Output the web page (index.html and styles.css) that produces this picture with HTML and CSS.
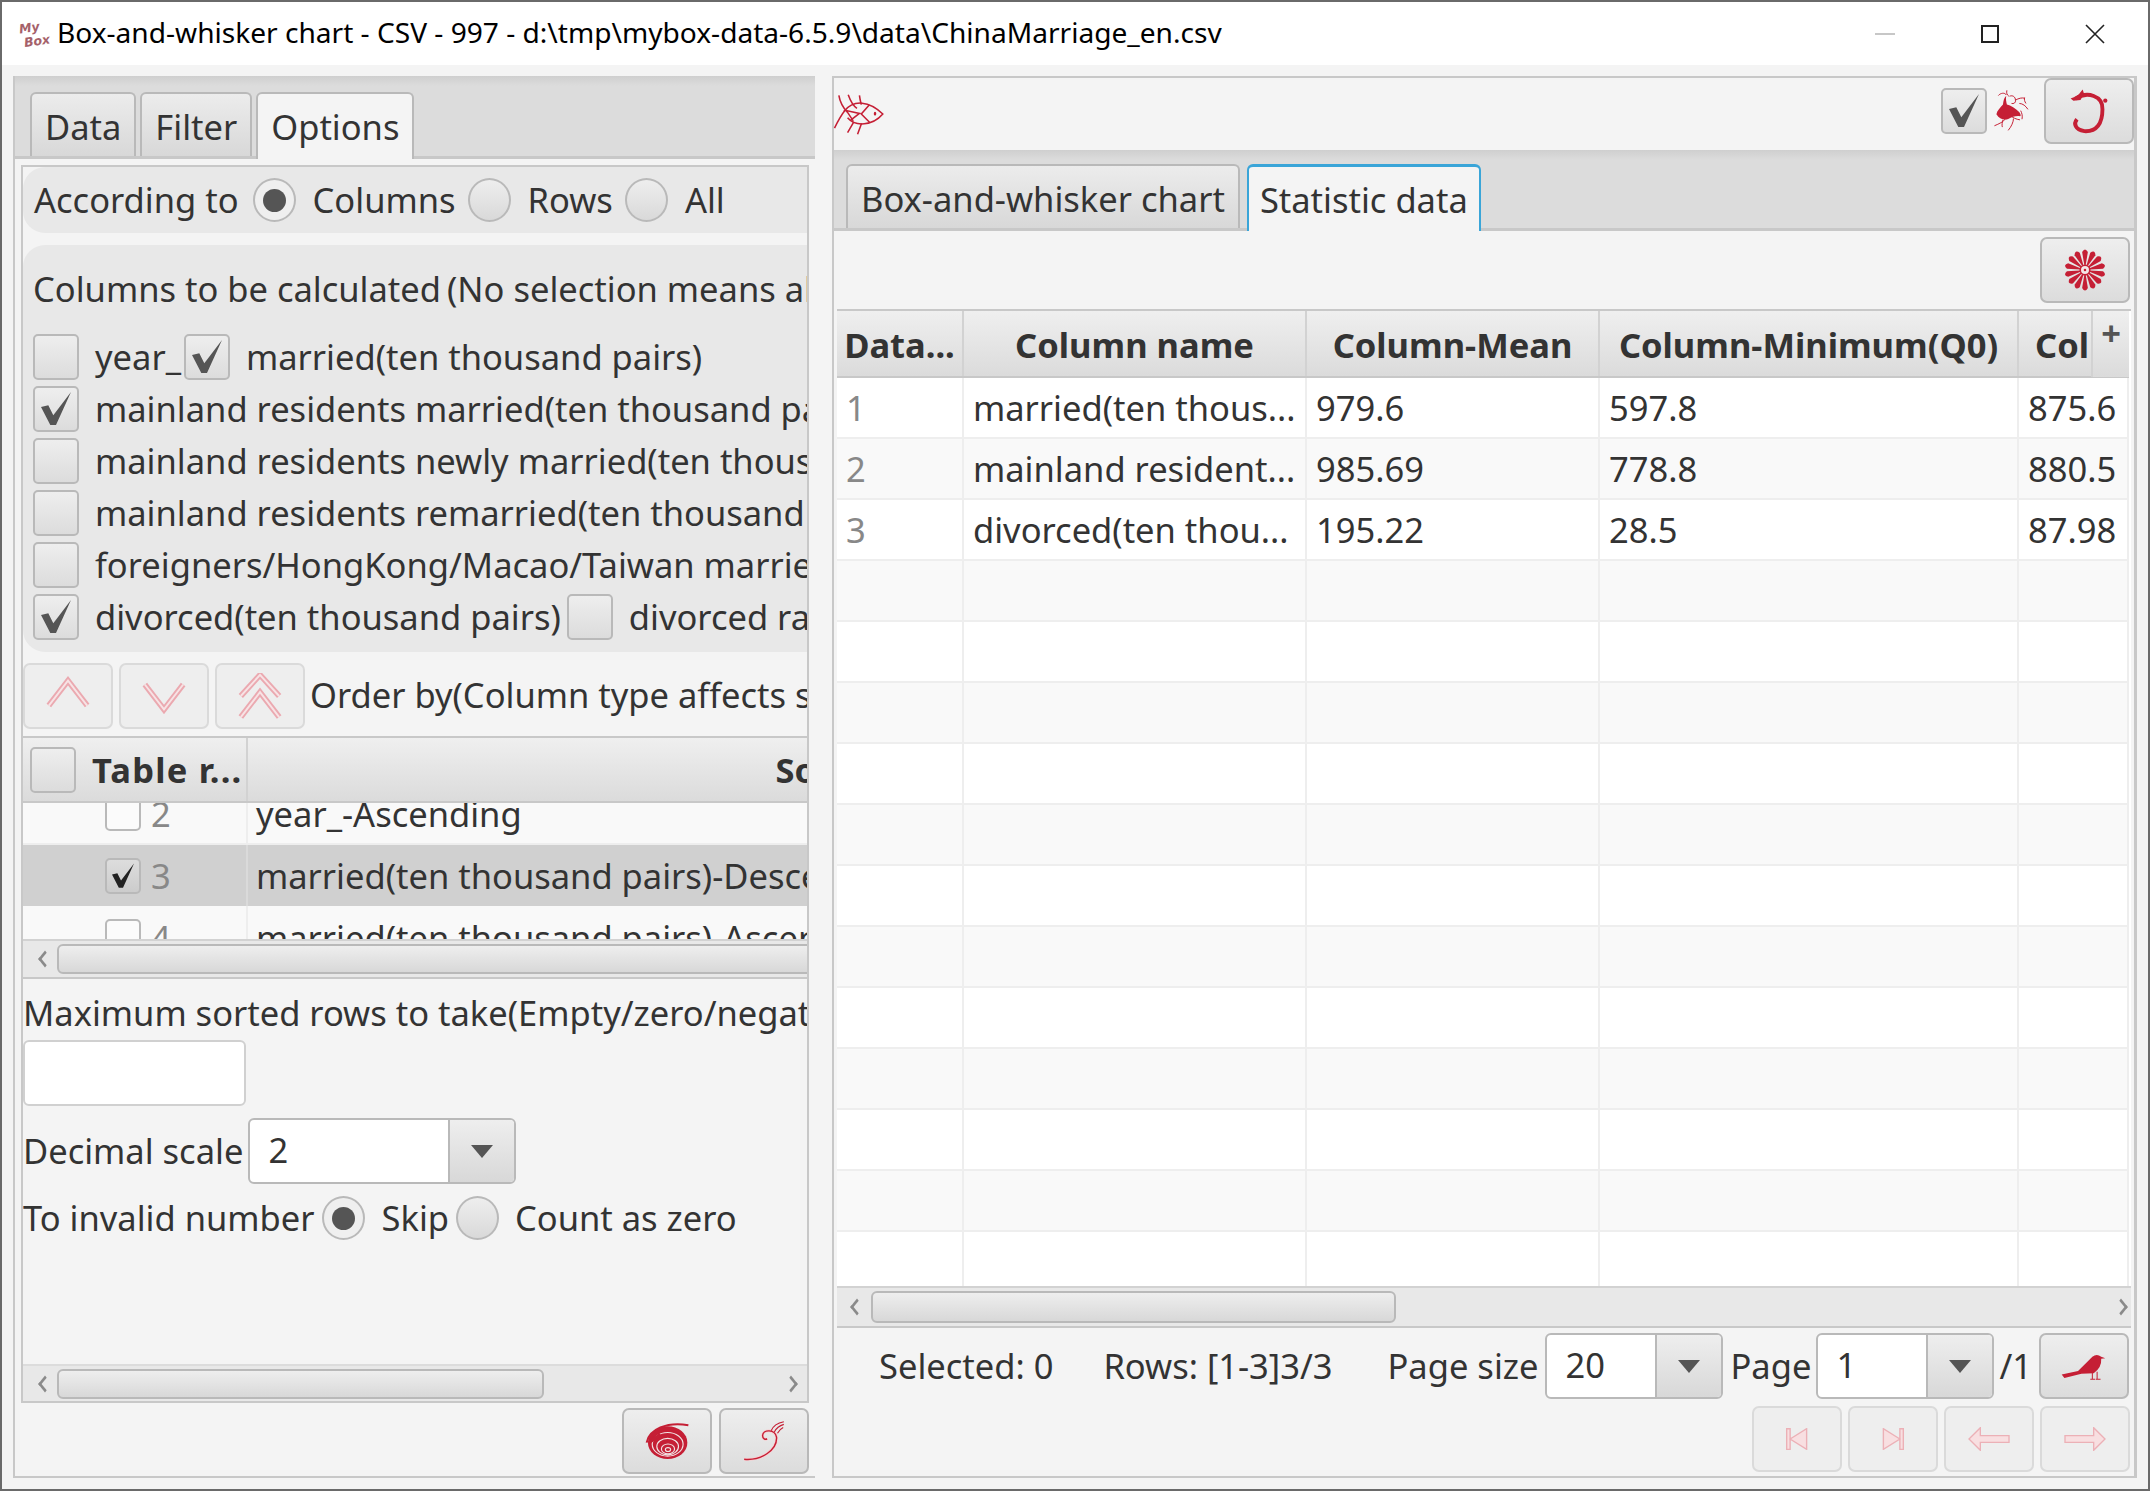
FILE: index.html
```html
<!DOCTYPE html>
<html lang="en">
<head>
  <meta charset="UTF-8"/>
  <title>Box-and-whisker chart - CSV - 997</title>
  <link rel="stylesheet" href="styles.css">
</head>
<body>
  <header class="titlebar">
    <div class="app-logo"><span>My</span><span>Box</span></div>
    <div class="title-text">Box-and-whisker chart - CSV - 997 - d:\tmp\mybox-data-6.5.9\data\ChinaMarriage_en.csv</div>
    <div class="win-controls">
      <svg class="win-icon" viewBox="0 0 20 20"><path d="M0 10h20" stroke="#b5b5b5" stroke-width="1.5"/></svg>
      <svg class="win-icon" viewBox="0 0 20 20"><rect x="2" y="2" width="16" height="16" fill="none" stroke="#222" stroke-width="2"/></svg>
      <svg class="win-icon" viewBox="0 0 20 20"><path d="M1 1l18 18M19 1L1 19" stroke="#222" stroke-width="1.6"/></svg>
    </div>
  </header>

  <div class="workspace">
    <!-- left pane -->
    <section class="left-pane">
      <div class="tab-header">
        <div class="tab">Data</div>
        <div class="tab">Filter</div>
        <div class="tab active">Options</div>
      </div>
      <div class="left-body">
        <div class="scroll-box">
          <div class="options">
            <div class="according">
              <span class="lbl l-according">According to</span>
              <span class="radio on"></span><span class="lbl l-columns">Columns</span>
              <span class="radio"></span><span class="lbl l-rows">Rows</span>
              <span class="radio"></span><span class="lbl l-all">All</span>
            </div>
            <div class="columns-group">
              <div class="group-title">Columns to be calculated<span class="thin-gap"></span>(No selection means all columns)</div>
              <div class="check-row"><span class="check"></span><span class="lbl">year_</span><span class="check on check-near">
                <svg class="tick" viewBox="0 0 30 34"><path d="M0 15l7.3-1.7 5 10L30 0 15 33H9.3z"/></svg></span><span class="lbl">married(ten thousand pairs)</span></div>
              <div class="check-row"><span class="check on">
                <svg class="tick" viewBox="0 0 30 34"><path d="M0 15l7.3-1.7 5 10L30 0 15 33H9.3z"/></svg></span><span class="lbl">mainland residents married(ten thousand pairs)</span></div>
              <div class="check-row"><span class="check"></span><span class="lbl">mainland residents newly married(ten thousand pairs)</span></div>
              <div class="check-row"><span class="check"></span><span class="lbl">mainland residents remarried(ten thousand pairs)</span></div>
              <div class="check-row"><span class="check"></span><span class="lbl">foreigners/HongKong/Macao/Taiwan married(ten thousand pairs)</span></div>
              <div class="check-row"><span class="check on">
                <svg class="tick" viewBox="0 0 30 34"><path d="M0 15l7.3-1.7 5 10L30 0 15 33H9.3z"/></svg></span><span class="lbl">divorced(ten thousand pairs)</span><span class="check"></span><span class="lbl">divorced rate</span></div>
            </div>

            <div class="order-bar">
              <button class="btn faded"><svg class="btn-icon" viewBox="0 0 48 48"><path class="chev" d="M4 34L24 8l20 26"/><path class="chev-in" d="M4 34L24 8l20 26"/></svg></button>
              <button class="btn faded"><svg class="btn-icon" viewBox="0 0 48 48"><path class="chev" d="M4 12l20 26 20-26"/><path class="chev-in" d="M4 12l20 26 20-26"/></svg></button>
              <button class="btn faded"><svg class="btn-icon" viewBox="0 0 48 48"><path class="chev" d="M4 24L24 2l20 22M4 46l20-26 20 26"/><path class="chev-in" d="M4 24L24 2l20 22M4 46l20-26 20 26"/></svg></button>
              <span class="lbl order-label">Order by(Column type affects sorting)</span>
            </div>

            <div class="sort-table">
              <div class="sort-head">
                <div class="sort-h-first"><span class="check"></span><b class="table-r">Table r...</b></div>
                <div class="sort-h-name"><b>Sort</b></div>
              </div>
              <div class="sort-rows">
                <div class="sort-row odd">
                  <div class="sort-num"><span class="check small"></span><span class="num">2</span></div>
                  <div class="sort-name">year_-Ascending</div>
                </div>
                <div class="sort-row selected">
                  <div class="sort-num"><span class="check small on"><svg class="tick" viewBox="0 0 30 34"><path d="M0 15l7.3-1.7 5 10L30 0 15 33H9.3z" fill="#222"/></svg></span><span class="num">3</span></div>
                  <div class="sort-name">married(ten thousand pairs)-Descending</div>
                </div>
                <div class="sort-row">
                  <div class="sort-num"><span class="check small"></span><span class="num">4</span></div>
                  <div class="sort-name">married(ten thousand pairs)-Ascending</div>
                </div>
              </div>
              <div class="hscroll inner">
                <span class="arrow-left"></span>
                <span class="thumb thumb-wide"></span>
              </div>
            </div>

            <div class="lbl max-label">Maximum sorted rows to take(Empty/zero/negative means all)</div>
            <div class="text-input"></div>
            <div class="scale-row">
              <span class="lbl">Decimal scale</span>
              <div class="combo combo-scale"><span class="combo-value">2</span><span class="combo-arrow"></span></div>
            </div>
            <div class="invalid-row">
              <span class="lbl l-invalid">To invalid number</span>
              <span class="radio on"></span><span class="lbl l-skip">Skip</span>
              <span class="radio"></span><span class="lbl l-zero">Count as zero</span>
            </div>
          </div>
          <div class="hscroll outer">
            <span class="arrow-left"></span>
            <span class="thumb thumb-outer"></span>
            <span class="arrow-right"></span>
          </div>
        </div>
        <div class="left-actions">
          <button class="btn">
            <svg class="btn-icon" viewBox="135 100 140 120">
              <path d="M143 165C150 125 205 100 270 112" fill="none" stroke="#c51f35" stroke-width="6"/>
              <ellipse cx="207" cy="165" rx="60" ry="50" fill="#c51f35"/>
              <g fill="none" stroke="#f1e4e5" stroke-width="3.5">
                <ellipse cx="207" cy="170" rx="47" ry="36"/>
                <ellipse cx="207" cy="177" rx="33" ry="25"/>
                <ellipse cx="208" cy="184" rx="20" ry="15"/>
                <ellipse cx="208" cy="186" rx="8" ry="6"/>
              </g>
              <path d="M150 165L185 140" stroke="#c51f35" stroke-width="10"/>
            </svg>
          </button>
          <button class="btn">
            <svg class="btn-icon" viewBox="415 85 145 135">
              <g fill="none">
                <path d="M425 210C480 215 530 180 527 140C522 115 485 115 483 135C483 145 492 150 497 145" stroke="#f9cdd0" stroke-width="9"/>
                <path d="M425 210C480 215 530 180 527 140C522 115 485 115 483 135C483 145 492 150 497 145" stroke="#c51f35" stroke-width="4.5"/>
                <path d="M510 120c6-14 20-24 40-28M520 124c6-12 16-20 30-24M530 128c4-8 10-14 18-18" stroke="#c51f35" stroke-width="3.5"/>
              </g>
            </svg>
          </button>
        </div>
      </div>
    </section>

    <div class="splitter"></div>

    <!-- right pane -->
    <section class="right-pane">
      <div class="chart-toolbar">
        <svg class="fish" viewBox="30 60 170 140">
          <g fill="none" stroke="#c51f35" stroke-width="5">
            <path d="M68 122C100 82 150 88 193 130C160 168 105 172 80 142"/>
            <path d="M52 70C56 95 66 110 80 125L98 152M38 175C48 155 58 135 72 118L118 128L90 150M82 68C88 85 94 100 110 112M118 70C120 85 122 92 124 100M150 100L124 130L152 158M100 155L80 190M125 160L112 195"/>
          </g>
          <ellipse cx="168" cy="129" rx="4" ry="6" fill="#c51f35"/>
        </svg>
        <span class="toolbar-space"></span>
        <span class="check on toolbar-check">
          <svg class="tick" viewBox="0 0 30 34"><path d="M0 15l7.3-1.7 5 10L30 0 15 33H9.3z"/></svg>
        </span>
        <svg class="phoenix" viewBox="280 88 112 134">
          <path d="M290 165c2-12 12-20 20-30 2-10 2-20 10-26-2 8 0 18 2 26 12 2 26 12 38 24 4 6 6 12 2 12-12-2-24 2-36 8-12 4-26 2-36-14z" fill="#c51f35"/>
          <g fill="none" stroke="#c51f35" stroke-width="3">
            <path d="M296 108c6-8 20-10 24-2M322 92c-2 8 0 14 6 18M330 110c10-4 18 2 18 12 2 8-6 12-12 10M348 122c10-6 20-8 28-6M376 114c-2 6 0 12 4 18M360 132c10 0 20 8 26 18M364 154c4 8 6 16 4 26M342 178c0 10-6 24-16 36M318 178c-6 10-20 16-34 22M310 182c-2 8-4 14-2 22M332 168c8 8 18 12 30 14"/>
          </g>
        </svg>
        <button class="btn top-btn">
          <svg class="btn-icon" viewBox="510 90 120 130">
            <path d="M532 120C565 98 610 112 608 150C608 190 592 214 557 212C530 208 526 190 536 178" fill="none" stroke="#c51f35" stroke-width="11"/>
            <path d="M518 120l20-8 14-18 4 12-10 18-20 2z" fill="#c51f35"/>
            <circle cx="616" cy="126" r="6" fill="#c51f35"/>
          </svg>
        </button>
      </div>
      <div class="tab-header right-tabs">
        <div class="tab t-chart">Box-and-whisker chart</div>
        <div class="tab active focused t-stat">Statistic data</div>
      </div>
      <div class="stat-body">
        <div class="stat-actions">
          <button class="btn">
            <svg class="btn-icon" viewBox="-72 -72 144 144">
              <defs><path id="petal" d="M-2-15L-9-56Q0-72 9-56L2-15z" fill="#c51f35"/></defs>
              <use href="#petal"/>
              <use href="#petal" transform="rotate(26)"/>
              <use href="#petal" transform="rotate(51)"/>
              <use href="#petal" transform="rotate(77)"/>
              <use href="#petal" transform="rotate(103)"/>
              <use href="#petal" transform="rotate(129)"/>
              <use href="#petal" transform="rotate(154)"/>
              <use href="#petal" transform="rotate(180)"/>
              <use href="#petal" transform="rotate(206)"/>
              <use href="#petal" transform="rotate(231)"/>
              <use href="#petal" transform="rotate(257)"/>
              <use href="#petal" transform="rotate(283)"/>
              <use href="#petal" transform="rotate(309)"/>
              <use href="#petal" transform="rotate(334)"/>
              <circle r="15" fill="#f3e6e7" stroke="#c51f35" stroke-width="5"/>
              <circle r="4" fill="#c51f35"/>
            </svg>
          </button>
        </div>
        <div class="stat-table-wrap">
          <div class="stat-table-clip">
            <table class="stat-table">
              <colgroup><col class="c1"><col class="c2"><col class="c3"><col class="c4"><col class="c5"></colgroup>
              <thead>
                <tr><th>Data...</th><th>Column name</th><th>Column-Mean</th><th>Column-Minimum(Q0)</th><th class="th-last">Col</th></tr>
              </thead>
              <tbody>
                <tr><td class="idx">1</td><td>married(ten thous...</td><td>979.6</td><td>597.8</td><td>875.6</td></tr>
                <tr><td class="idx">2</td><td>mainland resident...</td><td>985.69</td><td>778.8</td><td>880.5</td></tr>
                <tr><td class="idx">3</td><td>divorced(ten thou...</td><td>195.22</td><td>28.5</td><td>87.98</td></tr>
                <tr><td></td><td></td><td></td><td></td><td></td></tr>
                <tr><td></td><td></td><td></td><td></td><td></td></tr>
                <tr><td></td><td></td><td></td><td></td><td></td></tr>
                <tr><td></td><td></td><td></td><td></td><td></td></tr>
                <tr><td></td><td></td><td></td><td></td><td></td></tr>
                <tr><td></td><td></td><td></td><td></td><td></td></tr>
                <tr><td></td><td></td><td></td><td></td><td></td></tr>
                <tr><td></td><td></td><td></td><td></td><td></td></tr>
                <tr><td></td><td></td><td></td><td></td><td></td></tr>
                <tr><td></td><td></td><td></td><td></td><td></td></tr>
                <tr><td></td><td></td><td></td><td></td><td></td></tr>
                <tr><td></td><td></td><td></td><td></td><td></td></tr>
              </tbody>
            </table>
            <div class="corner-plus">+</div>
          </div>
          <div class="hscroll stat-scroll">
            <span class="arrow-left"></span>
            <span class="thumb thumb-stat"></span>
            <span class="arrow-right"></span>
          </div>
        </div>
        <div class="page-row">
          <span class="lbl p-selected">Selected: 0</span>
          <span class="lbl p-rows">Rows: [1-3]3/3</span>
          <span class="lbl p-size">Page size</span>
          <div class="combo combo-size"><span class="combo-value">20</span><span class="combo-arrow"></span></div>
          <span class="lbl p-page">Page</span>
          <div class="combo combo-page"><span class="combo-value">1</span><span class="combo-arrow"></span></div>
          <span class="lbl p-total">/1</span>
          <button class="btn">
            <svg class="btn-icon" viewBox="970 95 135 80">
              <path d="M972 160L1020 150L1040 130L1062 108Q1075 98 1088 108L1100 112L1088 114Q1090 140 1066 156L1030 158L980 170z" fill="#c51f35"/>
              <path d="M1062 155v20M1076 152v22M1056 174h14M1072 174h14" stroke="#c51f35" stroke-width="3" fill="none"/>
            </svg>
          </button>
        </div>
        <div class="nav-row">
          <button class="btn faded"><svg class="nav-icon" viewBox="0 0 64 64"><path class="nav-shape" d="M2 2h10v60H2zM12 32L60 2v60z"/></svg></button>
          <button class="btn faded"><svg class="nav-icon" viewBox="0 0 64 64"><path class="nav-shape" d="M52 2h10v60H52zM52 32L4 2v60z"/></svg></button>
          <button class="btn faded"><svg class="nav-icon wide" viewBox="0 0 124 72"><path class="nav-shape" d="M2 36L36 2v24h86v20H36v24z"/></svg></button>
          <button class="btn faded"><svg class="nav-icon wide" viewBox="0 0 124 72"><path class="nav-shape" d="M122 36L88 2v24H2v20h86v24z"/></svg></button>
        </div>
      </div>
    </section>
  </div>
</body>
</html>
```

FILE: styles.css
```css
:root {
  --text: #333;
  --pane: #f4f4f4;
  --panel: #e8e8e8;
  --line: #c8c8c8;
  --ctrl-line: #b9b9b9;
  --red: #c51f35;
}

* {
  margin: 0;
  padding: 0;
  box-sizing: border-box;
}

html, body {
  width: 2150px;
  height: 1491px;
  overflow: hidden;
}

body {
  font-family: "Noto Sans", "Open Sans", sans-serif;
  font-size: 34.5px;
  color: var(--text);
  background: #6a6a6a;
  padding: 2px 2px 2px 2px;
  display: flex;
  flex-direction: column;
}

.lbl {
  white-space: nowrap;
  line-height: 44px;
}

/* Title bar */
.titlebar {
  height: 63px;
  background: #fff;
  display: flex;
  align-items: center;
  flex: none;
  padding-left: 18px;
  color: #000;
}

.app-logo {
  width: 37px;
  display: flex;
  flex-direction: column;
  font-family: "DejaVu Sans", sans-serif;
  font-size: 12.5px;
  font-weight: bold;
  font-style: italic;
  line-height: 14px;
  color: #a5616a;
  transform: rotate(-8deg);
}

.app-logo span:last-child {
  margin-left: 3px;
}

.title-text {
  font-size: 28.1px;
  white-space: nowrap;
  flex: 1;
  padding-bottom: 3px;
}

.win-controls {
  display: flex;
  gap: 85px;
  margin-right: 43px;
}

.win-icon {
  width: 20px;
  height: 20px;
  display: block;
}

/* Main area */
.workspace {
  flex: 1;
  display: flex;
  background: var(--pane);
  padding: 11px 11px 11px 11px;
}

.left-pane {
  width: 802px;
  flex: none;
  display: flex;
  flex-direction: column;
  border-left: 2px solid var(--line);
  border-bottom: 2px solid var(--line);
}

.splitter {
  width: 17px;
  flex: none;
}

.right-pane {
  width: 1305px;
  flex: none;
  display: flex;
  flex-direction: column;
  border-left: 2px solid var(--line);
  border-top: 2px solid var(--line);
  border-right: 3px solid var(--line);
  border-bottom: 2px solid var(--line);
}

/* Tabs */
.tab-header {
  height: 83px;
  flex: none;
  background: linear-gradient(#cfcfcf 0, #dcdcdc 10px);
  border-bottom: 3px solid var(--line);
  display: flex;
  align-items: flex-end;
  padding-left: 15px;
  gap: 4px;
}

.tab {
  height: 64px;
  padding: 0 13px;
  line-height: 66px;
  background: linear-gradient(#ececec, #d8d8d8);
  border: 2px solid var(--ctrl-line);
  border-bottom: none;
  border-radius: 6px 6px 0 0;
  white-space: nowrap;
}

.tab.active {
  background: var(--pane);
  margin-bottom: -3px;
  height: 67px;
}

.tab.focused {
  border: 2px solid #3aa5d8;
  border-top-width: 3px;
  border-bottom: none;
  padding: 0 11px;
}

/* Left pane content */
.left-body {
  flex: 1;
  display: flex;
  flex-direction: column;
  padding: 6px 6px 0 6px;
  min-height: 0;
}

.scroll-box {
  height: 1238px;
  flex: none;
  border: 2px solid var(--line);
  display: flex;
  flex-direction: column;
  overflow: hidden;
}

.options {
  height: 1197px;
  flex: none;
  overflow: hidden;
}

.according {
  height: 66px;
  margin-bottom: 12px;
  background: var(--panel);
  border-radius: 22px 0 0 22px;
  display: flex;
  align-items: center;
  padding-left: 11px;
}

.radio {
  width: 43px;
  height: 44px;
  flex: none;
  border-radius: 50%;
  border: 2px solid var(--ctrl-line);
  background: linear-gradient(#eee, #d9d9d9);
  display: inline-flex;
  align-items: center;
  justify-content: center;
}

.radio.on::after {
  content: "";
  width: 23px;
  height: 23px;
  border-radius: 50%;
  background: #555;
}

.radio.on {
  background: #efefef;
}

.l-according { margin-right: 14px; }
.l-columns { margin: 0 12px 0 17px; }
.l-rows { margin: 0 12px 0 17px; }
.l-all { margin-left: 17px; }

.columns-group {
  height: 407px;
  background: var(--panel);
  border-radius: 22px 0 0 22px;
  padding: 22px 0 0 10px;
  overflow: hidden;
  white-space: nowrap;
}

.group-title {
  line-height: 44px;
  margin: 0 0 23px 0;
  white-space: nowrap;
}

.thin-gap {
  display: inline-block;
  width: 6px;
}

.check-row {
  height: 46px;
  margin-bottom: 6px;
  display: flex;
  align-items: center;
  white-space: nowrap;
}

.check {
  width: 46px;
  height: 46px;
  flex: none;
  border: 2px solid var(--ctrl-line);
  border-radius: 5px;
  background: linear-gradient(#eee, #dcdcdc);
  display: inline-flex;
  align-items: center;
  justify-content: center;
}

.check + .lbl {
  margin-left: 16px;
}

.lbl + .check {
  margin-left: 6px;
}

.lbl + .check-near {
  margin-left: 3px;
}

.tick {
  width: 30px;
  height: 34px;
  fill: #555;
  display: block;
}

.btn {
  width: 90px;
  height: 66px;
  flex: none;
  border: 2px solid var(--ctrl-line);
  border-radius: 7px;
  background: linear-gradient(#eee, #dcdcdc);
  display: inline-flex;
  align-items: center;
  justify-content: center;
}

.btn.faded {
  border-color: #dadada;
  background: #eee;
}

.btn-icon {
  width: 46px;
  height: 46px;
  display: block;
}

.chev {
  fill: none;
  stroke: #eba9b0;
  stroke-width: 6;
}

.chev-in {
  fill: none;
  stroke: #f7e3e5;
  stroke-width: 2;
}

.order-bar {
  margin-top: 11px;
  height: 66px;
  display: flex;
  align-items: center;
  gap: 6px;
  white-space: nowrap;
}

.order-label {
  margin-top: -2px;
  margin-left: -1px;
}

/* Sort table */
.sort-table {
  margin-top: 7px;
  height: 243px;
  border-top: 2px solid var(--line);
  border-bottom: 2px solid var(--line);
  overflow: hidden;
}

.sort-head {
  height: 63px;
  display: flex;
  background: linear-gradient(#efefef, #dbdbdb);
  border-bottom: 2px solid var(--line);
  box-sizing: content-box;
}

.sort-h-first {
  width: 225px;
  flex: none;
  display: flex;
  align-items: center;
  padding-left: 7px;
  gap: 16px;
  border-right: 2px solid #d2d2d2;
  white-space: nowrap;
}

.table-r {
  letter-spacing: 1.2px;
}

.sort-h-name {
  width: 1126px;
  flex: none;
  display: flex;
  align-items: center;
  justify-content: center;
}

.sort-rows {
  height: 136px;
  overflow: hidden;
}

.sort-row {
  height: 62px;
  display: flex;
  background: #f9f9f9;
  white-space: nowrap;
}

.sort-row.odd {
  margin-top: -20px;
  border-bottom: 2px solid #eee;
}

.sort-row.selected {
  height: 61px;
  background: #d0d0d0;
}

.sort-num {
  width: 225px;
  flex: none;
  display: flex;
  align-items: center;
  padding-left: 82px;
  gap: 10px;
  border-right: 2px solid #eee;
}

.selected .sort-num {
  border-right-color: #dadada;
}

.num {
  color: #888;
}

.check.small {
  width: 36px;
  height: 36px;
  background: #fbfbfb;
}

.check.small.on {
  background: linear-gradient(#ddd, #ccc);
}

.check.small .tick {
  width: 22px;
  height: 26px;
}

.sort-name {
  padding-left: 8px;
  display: flex;
  align-items: center;
}

/* Scroll bars */
.hscroll {
  background: var(--panel);
  display: flex;
  align-items: center;
  position: relative;
}

.hscroll.inner {
  height: 38px;
  border-top: 2px solid #d2d2d2;
  padding-left: 12px;
}

.hscroll.outer {
  height: 37px;
  flex: none;
  border-top: 2px solid #dcdcdc;
  padding: 0 10px 0 12px;
}

.stat-scroll {
  height: 40px;
  flex: none;
  border-top: 2px solid #d2d2d2;
  padding: 0 4px 0 10px;
}

.arrow-left, .arrow-right {
  width: 12px;
  height: 12px;
  flex: none;
  margin: 0 6px 0 4px;
  border-left: 3px solid #8a8a8a;
  border-bottom: 3px solid #8a8a8a;
  transform: scaleX(0.8) rotate(45deg);
}

.stat-scroll .arrow-left {
  margin-right: 8px;
}

.arrow-right {
  margin: 0 0 0 auto;
  transform: scaleX(0.8) rotate(-135deg);
}

.thumb {
  height: 30px;
  flex: none;
  border: 2px solid var(--ctrl-line);
  border-radius: 6px;
  background: linear-gradient(#eee, #d8d8d8);
}

.thumb-wide { width: 780px; }
.thumb-outer { width: 487px; }
.thumb-stat { width: 525px; height: 32px; }

/* Lower form */
.max-label {
  margin-top: 12px;
  line-height: 44px;
  white-space: nowrap;
}

.text-input {
  width: 223px;
  height: 66px;
  margin-top: 5px;
  background: #fff;
  border: 2px solid #d0d0d0;
  border-radius: 6px;
}

.scale-row {
  margin-top: 12px;
  height: 66px;
  display: flex;
  align-items: center;
  gap: 5px;
}

.combo {
  height: 66px;
  flex: none;
  display: flex;
  border: 2px solid var(--ctrl-line);
  border-radius: 6px;
  background: #fff;
  overflow: hidden;
}

.combo-value {
  flex: 1;
  line-height: 60px;
  padding-left: 18px;
}

.combo-arrow {
  width: 66px;
  flex: none;
  background: linear-gradient(#eee, #d8d8d8);
  border-left: 2px solid var(--ctrl-line);
  position: relative;
}

.combo-arrow::after {
  content: "";
  position: absolute;
  left: 50%;
  top: 50%;
  margin: -6px 0 0 -11px;
  border: 11px solid transparent;
  border-top: 13px solid #555;
  border-bottom: none;
}

.combo-scale { width: 268px; }
.combo-size { width: 178px; }
.combo-page { width: 178px; }

.invalid-row {
  margin-top: 12px;
  height: 44px;
  display: flex;
  align-items: center;
}

.l-invalid { margin-right: 7px; }
.l-skip { margin: 0 7px 0 17px; }
.l-zero { margin-left: 16px; }

.left-actions {
  display: flex;
  justify-content: flex-end;
  gap: 7px;
  padding-top: 5px;
}

/* Right pane */
.chart-toolbar {
  height: 72px;
  flex: none;
  display: flex;
  align-items: center;
}

.fish {
  width: 53px;
  height: 44px;
  margin: 0 0 0 -2px;
  flex: none;
}

.toolbar-space {
  flex: 1;
}

.toolbar-check {
  margin-bottom: 6px;
}

.phoenix {
  width: 37px;
  height: 44px;
  margin: 0 14px 6px 6px;
  flex: none;
}

.top-btn {
  align-self: flex-start;
}

.right-tabs {
  height: 81px;
}

.t-chart {
  margin-left: -3px;
}

.t-stat {
  margin-left: 3px;
}

.stat-body {
  flex: 1;
  display: flex;
  flex-direction: column;
  min-height: 0;
}

.stat-actions {
  height: 78px;
  flex: none;
  display: flex;
  justify-content: flex-end;
  padding: 6px 4px 0 0;
}

.stat-table-wrap {
  margin: 0 3px 0 3px;
  height: 1019px;
  flex: none;
  border-top: 2px solid var(--line);
  border-bottom: 2px solid var(--line);
  display: flex;
  flex-direction: column;
}

.stat-table-clip {
  flex: 1;
  min-height: 0;
  overflow: hidden;
  position: relative;
  background: #fff;
}

.stat-table {
  table-layout: fixed;
  border-collapse: collapse;
  width: 1291px;
}

.c1 { width: 126px; }
.c2 { width: 343px; }
.c3 { width: 293px; }
.c4 { width: 419px; }
.c5 { width: 110px; }

.stat-table th {
  height: 66px;
  padding-top: 1px;
  font-weight: bold;
  text-align: center;
  white-space: nowrap;
  overflow: hidden;
  background: linear-gradient(#efefef, #dbdbdb);
  border-right: 2px solid #d2d2d2;
  border-bottom: 2px solid var(--line);
}

.stat-table th.th-last {
  text-align: left;
  padding-left: 16px;
}

.stat-table td {
  height: 61px;
  padding: 0 9px;
  white-space: nowrap;
  overflow: hidden;
  border-right: 2px solid #eee;
  border-bottom: 2px solid #eee;
}

.stat-table tbody tr:nth-child(even) td {
  background: #f9f9f9;
}

.stat-table td.idx {
  color: #888;
}

.corner-plus {
  position: absolute;
  right: 2px;
  top: 0;
  width: 38px;
  height: 66px;
  line-height: 44px;
  text-align: center;
  font-weight: bold;
  color: #555;
  border-left: 2px solid #d2d2d2;
  background: linear-gradient(#efefef, #dbdbdb);
}

.page-row {
  height: 71px;
  flex: none;
  padding-top: 5px;
  display: flex;
  align-items: center;
}

.p-selected { margin-left: 45px; }
.p-rows { margin-left: 50px; }
.p-size { margin-left: 55px; margin-right: 7px; }
.p-page { margin: 0 5px 0 7px; }
.p-total { margin: 0 7px 0 5px; }

.nav-row {
  display: flex;
  justify-content: flex-end;
  gap: 6px;
  padding: 7px 4px 0 0;
}

.nav-icon {
  width: 22px;
  height: 22px;
}

.nav-icon.wide {
  width: 42px;
  height: 24px;
}

.nav-shape {
  fill: #f8dfe1;
  stroke: #ecb0b6;
  stroke-width: 4;
}
```
